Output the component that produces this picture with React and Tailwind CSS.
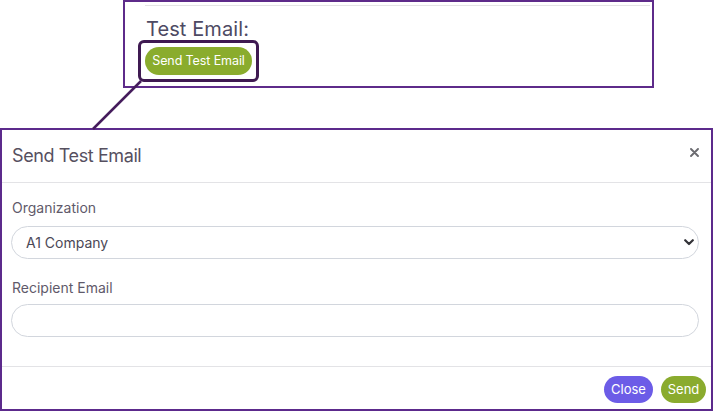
import React from "react";

export default function App() {
  return (
    <div className="relative w-[713px] h-[411px] overflow-hidden bg-white font-['Inter',_'Noto_Sans',_sans-serif]">
      {/* Top cropped section */}
      <div className="h-[128px]">
        <div className="ml-[123px] w-[531px] h-[88px] border-2 border-[#5e2b8a]">
          <div className="mt-[3px] ml-[20px] mr-[2px] h-px bg-[#e4e4e4]" />
          <div className="mt-[11px] ml-[21px] text-[20px] leading-[24px] tracking-[0.1px] text-[#4d4a63]">
            Test Email:
          </div>
          <div className="relative mt-[6px] ml-[20px] w-[107px] h-[28px]">
            <button className="w-full h-full rounded-full bg-[#8aac2d] text-white text-[12.5px] tracking-[-0.1px] flex items-center justify-center">
              Send Test Email
            </button>
            <div className="absolute -inset-[7px] border-[3px] border-[#3f1a52] rounded-[6px] pointer-events-none" />
          </div>
        </div>
      </div>

      {/* connector line */}
      <svg className="absolute left-0 top-0 pointer-events-none" width="713" height="140">
        <line x1="141" y1="81" x2="93" y2="129" stroke="#451c5c" strokeWidth="2.5" />
      </svg>

      {/* Modal */}
      <div className="h-[283px] border-2 border-[#5c2a8c] flex flex-col">
        <div className="h-[53px] shrink-0 border-b border-[#e3e3e6] flex items-start justify-between">
          <div className="mt-[12px] ml-[10px] text-[18px] leading-[28px] tracking-[-0.4px] text-[#56505f]">
            Send Test Email
          </div>
          <svg className="mt-[18px] mr-[12px]" width="9" height="9" viewBox="0 0 9 9">
            <path d="M1 1 L8 8 M8 1 L1 8" stroke="#6b6b70" strokeWidth="1.9" strokeLinecap="round" />
          </svg>
        </div>

        <div className="h-[183px] shrink-0 pt-[15px] pl-[9px] pr-[12px] flex flex-col">
          <div className="ml-[1px] text-[14px] leading-[20px] text-[#5f5a6a]">Organization</div>
          <div className="mt-[8px] h-[33px] rounded-full border border-[#d2d6dd] flex items-center justify-between pl-[14px] pr-[4px]">
            <span className="text-[14px] text-[#4b4856]">A1 Company</span>
            <svg width="10" height="7" viewBox="0 0 10 7">
              <path d="M1.2 1.2 L5 5 L8.8 1.2" fill="none" stroke="#333338" strokeWidth="2.2" strokeLinecap="round" strokeLinejoin="round" />
            </svg>
          </div>
          <div className="mt-[19px] ml-[1px] text-[14px] leading-[20px] text-[#5f5a6a]">Recipient Email</div>
          <div className="mt-[6px] h-[33px] rounded-full border border-[#d2d6dd]" />
        </div>

        <div className="flex-1 border-t border-[#e3e3e6] pt-[9px] pr-[5px] flex justify-end items-start gap-[8px]">
          <button className="w-[49px] h-[27px] rounded-full bg-[#6c5ce7] text-white text-[13px] flex items-center justify-center">
            Close
          </button>
          <button className="w-[45px] h-[27px] rounded-full bg-[#8aab2e] text-white text-[13px] flex items-center justify-center">
            Send
          </button>
        </div>
      </div>
    </div>
  );
}
